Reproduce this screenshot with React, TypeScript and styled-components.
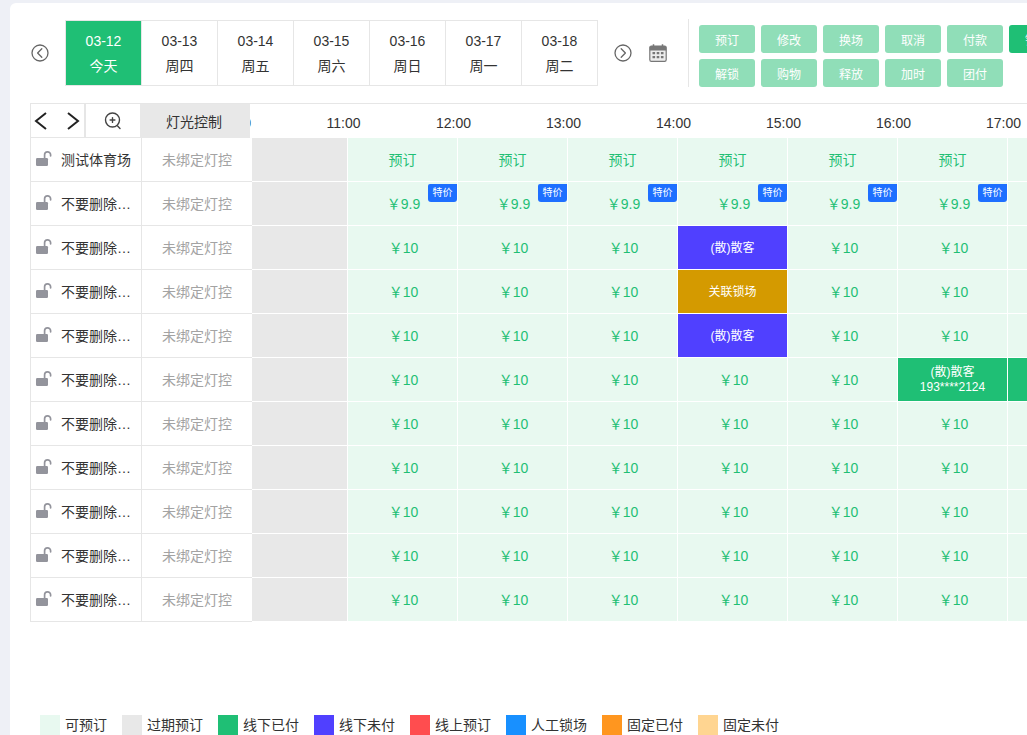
import React from "react";
import styled, { createGlobalStyle } from "styled-components";

const GREEN = "#1fbf75";
const LIGHT = "#e8f9f0";
const GREY = "#e8e8e8";
const LINE = "#e6e6e6";

const Global = createGlobalStyle`
  html, body { margin: 0; height: 100%; overflow: hidden; background: #eef0f6; }
  body { font-family: "Liberation Sans", "Noto Sans CJK SC", sans-serif; font-size: 14px; color: #333; }
  * { box-sizing: border-box; }
`;

const Panel = styled.div`
  margin: 3px 0 0 10px;
  height: 732px;
  background: #fff;
  border-top-left-radius: 6px;
  overflow: hidden;
`;
const Toolbar = styled.div`
  display: flex;
  align-items: center;
  width: 1100px;
  height: 68px;
  margin-top: 16px;
  padding-left: 21px;
`;
const RoundIcon = styled.svg`
  flex: none;
  width: 18px;
  height: 18px;
`;
const DateStrip = styled.div`
  display: flex;
  flex: none;
  margin: 0 16px;
  height: 66px;
  border: 1px solid ${LINE};
`;
const DateCell = styled.div<{ $active?: boolean }>`
  width: 76px;
  display: flex;
  flex-direction: column;
  align-items: center;
  justify-content: center;
  gap: 5px;
  line-height: 20px;
  color: ${(p) => (p.$active ? "#fff" : "#333")};
  background: ${(p) => (p.$active ? GREEN : "#fff")};
  border-right: 1px solid ${LINE};
  &:last-child { border-right: 0; width: 75px; }
`;
const CalendarIcon = styled.svg`
  flex: none;
  width: 18px;
  height: 18px;
  margin-left: 17px;
`;
const Divider = styled.div`
  flex: none;
  width: 1px;
  height: 68px;
  margin: 0 10px 0 21px;
  background: ${LINE};
`;
const ActionGrid = styled.div`
  display: grid;
  align-self: flex-end;
  grid-template-columns: repeat(6, 56px);
  grid-auto-rows: 28px;
  gap: 6px;
`;
const ActionButton = styled.div<{ $on?: boolean }>`
  display: flex;
  align-items: center;
  justify-content: center;
  font-size: 12px;
  color: #fff;
  border-radius: 3px;
  background: ${(p) => (p.$on ? GREEN : "#90deb8")};
`;
const Board = styled.div`
  margin: 16px 0 0 20px;
  width: 1100px;
`;
const HeaderRow = styled.div`
  display: flex;
  height: 35px;
  border-top: 1px solid ${LINE};
`;
const NavCell = styled.div`
  display: flex;
  align-items: center;
  justify-content: space-between;
  flex: none;
  width: 56px;
  padding: 0 3px 0 2px;
  border-left: 1px solid ${LINE};
  border-right: 2px solid ${LINE};
  border-bottom: 1px solid ${LINE};
`;
const Chevron = styled.svg`
  width: 16px;
  height: 22px;
`;
const ZoomCell = styled.div`
  display: flex;
  align-items: center;
  justify-content: center;
  flex: none;
  width: 54px;
  border-bottom: 1px solid ${LINE};
`;
const LampHead = styled.div`
  display: flex;
  align-items: center;
  justify-content: center;
  flex: none;
  width: 110px;
  padding-right: 2px;
  background: ${GREY};
`;
const TimeClip = styled.div`
  flex: 1;
  min-width: 0;
  overflow: hidden;
`;
const TimeTrack = styled.div`
  display: flex;
  margin-left: -71px;
  height: 34px;
`;
const TimeLabel = styled.div`
  flex: none;
  width: 110px;
  display: flex;
  align-items: center;
  justify-content: center;
  padding: 3px 1px 0 0;
`;
const Row = styled.div`
  display: flex;
  height: 44px;
`;
const NameCell = styled.div`
  display: flex;
  align-items: center;
  flex: none;
  width: 111px;
  padding: 0 0 2px 5px;
  gap: 9px;
  border-left: 1px solid ${LINE};
  border-bottom: 1px solid ${LINE};
  color: #333;
`;
const LockIcon = styled.svg`
  flex: none;
  width: 16px;
  height: 17px;
  margin-top: 1px;
`;
const NameText = styled.span`
  width: 70px;
  white-space: nowrap;
  overflow: hidden;
  text-overflow: ellipsis;
`;
const LampCell = styled.div`
  display: flex;
  align-items: center;
  justify-content: center;
  flex: none;
  width: 111px;
  padding-bottom: 2px;
  color: #a3a3a3;
  border-left: 1px solid ${LINE};
  border-bottom: 1px solid ${LINE};
`;
const ExpiredBlock = styled.div`
  flex: none;
  width: 96px;
  background: ${GREY};
  border-right: 1px solid #fff;
  border-bottom: 1px solid #fff;
`;
const Slot = styled.div<{ $bg?: string }>`
  position: relative;
  flex: none;
  width: 110px;
  display: flex;
  flex-direction: column;
  align-items: center;
  justify-content: center;
  padding-top: ${(p) => (p.$bg ? "1px" : "0")};
  color: ${(p) => (p.$bg ? "#fff" : GREEN)};
  font-size: ${(p) => (p.$bg ? "12px" : "14px")};
  line-height: ${(p) => (p.$bg ? "15px" : "20px")};
  background: ${(p) => p.$bg ?? LIGHT};
  background-clip: padding-box;
  border-right: 1px solid #fff;
  border-bottom: 1px solid #fff;
`;
const Price = styled.span`
  margin-left: 2px;
`;
const Tag = styled.span`
  position: absolute;
  top: 2px;
  right: 0;
  width: 29px;
  height: 18px;
  display: flex;
  align-items: center;
  justify-content: center;
  font-size: 10px;
  color: #fff;
  background: #1e6fff;
  border-radius: 2px 0 3px 3px;
`;
const Legend = styled.div`
  display: flex;
  gap: 15px;
  margin: 93px 0 0 30px;
`;
const LegendItem = styled.div`
  display: flex;
  align-items: center;
  gap: 5px;
  line-height: 20px;
  white-space: nowrap;
`;
const Swatch = styled.span<{ $c: string }>`
  width: 20px;
  height: 20px;
  background: ${(p) => p.$c};
`;

const CircleArrow = ({ dir }: { dir: "l" | "r" }) => (
  <RoundIcon viewBox="0 0 18 18" fill="none" stroke="#666" strokeWidth="1.3">
    <circle cx="9" cy="9" r="8" />
    <path d={dir === "l" ? "M10.8 4.8 6.6 9l4.2 4.2" : "M7.2 4.8 11.4 9l-4.2 4.2"} strokeLinecap="round" strokeLinejoin="round" />
  </RoundIcon>
);
const Lock = () => (
  <LockIcon viewBox="0 0 16 17">
    <path d="M8.6 7.5V4a3 3 0 0 1 6-.2v1" fill="none" stroke="#93949c" strokeWidth="1.7" strokeLinecap="round" />
    <rect x="0" y="7" width="12" height="8" rx="1.2" fill="#93949c" />
  </LockIcon>
);

const dates = [["03-12", "今天"], ["03-13", "周四"], ["03-14", "周五"], ["03-15", "周六"], ["03-16", "周日"], ["03-17", "周一"], ["03-18", "周二"]];
const actions = ["预订", "修改", "换场", "取消", "付款", "锁场", "解锁", "购物", "释放", "加时", "团付"];
const times = ["10:00", "11:00", "12:00", "13:00", "14:00", "15:00", "16:00", "17:00", "18:00"];
const BLUE = "#5040ff";
const AMBER = "#d49a00";
const legend: [string, string][] = [
  ["可预订", LIGHT], ["过期预订", GREY], ["线下已付", GREEN], ["线下未付", BLUE],
  ["线上预订", "#ff4d4f"], ["人工锁场", "#1890ff"], ["固定已付", "#ff961f"], ["固定未付", "#ffd591"],
];
const booked: Record<string, { bg: string; lines: string[] }> = {
  "2-3": { bg: BLUE, lines: ["(散)散客"] },
  "3-3": { bg: AMBER, lines: ["关联锁场"] },
  "4-3": { bg: BLUE, lines: ["(散)散客"] },
  "5-5": { bg: GREEN, lines: ["(散)散客", "193****2124"] },
  "5-6": { bg: GREEN, lines: ["(散)散客", "193****2124"] },
};
const columns = [0, 1, 2, 3, 4, 5, 6];
const rows = Array.from({ length: 11 }, (_, i) => i);

export default function App() {
  return (
    <Panel>
      <Global />
      <Toolbar>
        <CircleArrow dir="l" />
        <DateStrip>
          {dates.map(([d, w], i) => (
            <DateCell key={d} $active={i === 0}>
              <span>{d}</span>
              <span>{w}</span>
            </DateCell>
          ))}
        </DateStrip>
        <CircleArrow dir="r" />
        <CalendarIcon viewBox="0 0 18 18">
          <rect x="0.8" y="2" width="16.4" height="15.4" rx="1.6" fill="#ededed" stroke="#777" strokeWidth="1.2" />
          <path d="M.8 3.6A1.6 1.6 0 0 1 2.4 2h13.2a1.6 1.6 0 0 1 1.6 1.6V6.5H.8Z" fill="#777" />
          <path d="M4.5.3v3.4M13.5.3v3.4" stroke="#777" strokeWidth="1.5" />
          <path d="M3.5 8h2.6v2.2H3.5zM7.7 8h2.6v2.2H7.7zM11.9 8h2.6v2.2h-2.6zM3.5 12h2.6v2.2H3.5zM7.7 12h2.6v2.2H7.7zM11.9 12h2.6v2.2h-2.6z" fill="#777" />
        </CalendarIcon>
        <Divider />
        <ActionGrid>
          {actions.map((a, i) => (
            <ActionButton key={a} $on={i === 5}>{a}</ActionButton>
          ))}
        </ActionGrid>
      </Toolbar>
      <Board>
        <HeaderRow>
          <NavCell>
            <Chevron viewBox="0 0 16 22" fill="none" stroke="#222" strokeWidth="2"><path d="M13 3 3 11l10 8" /></Chevron>
            <Chevron viewBox="0 0 16 22" fill="none" stroke="#222" strokeWidth="2"><path d="m3 3 10 8-10 8" /></Chevron>
          </NavCell>
          <ZoomCell>
            <svg width="18" height="18" viewBox="0 0 18 18" fill="none" stroke="#444" strokeWidth="1.4" strokeLinecap="round">
              <circle cx="8.5" cy="8" r="7" />
              <path d="M8.5 5.6v4.8M6.1 8h4.8M13.6 14l2.4 2.4" />
            </svg>
          </ZoomCell>
          <LampHead>灯光控制</LampHead>
          <TimeClip>
            <TimeTrack>
              {times.map((t) => <TimeLabel key={t}>{t}</TimeLabel>)}
            </TimeTrack>
          </TimeClip>
        </HeaderRow>
        {rows.map((r) => (
          <Row key={r}>
            <NameCell>
              <Lock />
              <NameText>{r === 0 ? "测试体育场" : "不要删除测试场地"}</NameText>
            </NameCell>
            <LampCell>未绑定灯控</LampCell>
            <ExpiredBlock />
            {columns.map((c) => {
              const b = booked[`${r}-${c}`];
              if (b) {
                return (
                  <Slot key={c} $bg={b.bg}>
                    {b.lines.map((l) => <span key={l}>{l}</span>)}
                  </Slot>
                );
              }
              return (
                <Slot key={c}>
                  {r === 0 ? "预订" : <Price>{r === 1 ? "￥9.9" : "￥10"}</Price>}
                  {r === 1 && <Tag>特价</Tag>}
                </Slot>
              );
            })}
          </Row>
        ))}
      </Board>
      <Legend>
        {legend.map(([t, c]) => (
          <LegendItem key={t}>
            <Swatch $c={c} />
            {t}
          </LegendItem>
        ))}
      </Legend>
    </Panel>
  );
}
